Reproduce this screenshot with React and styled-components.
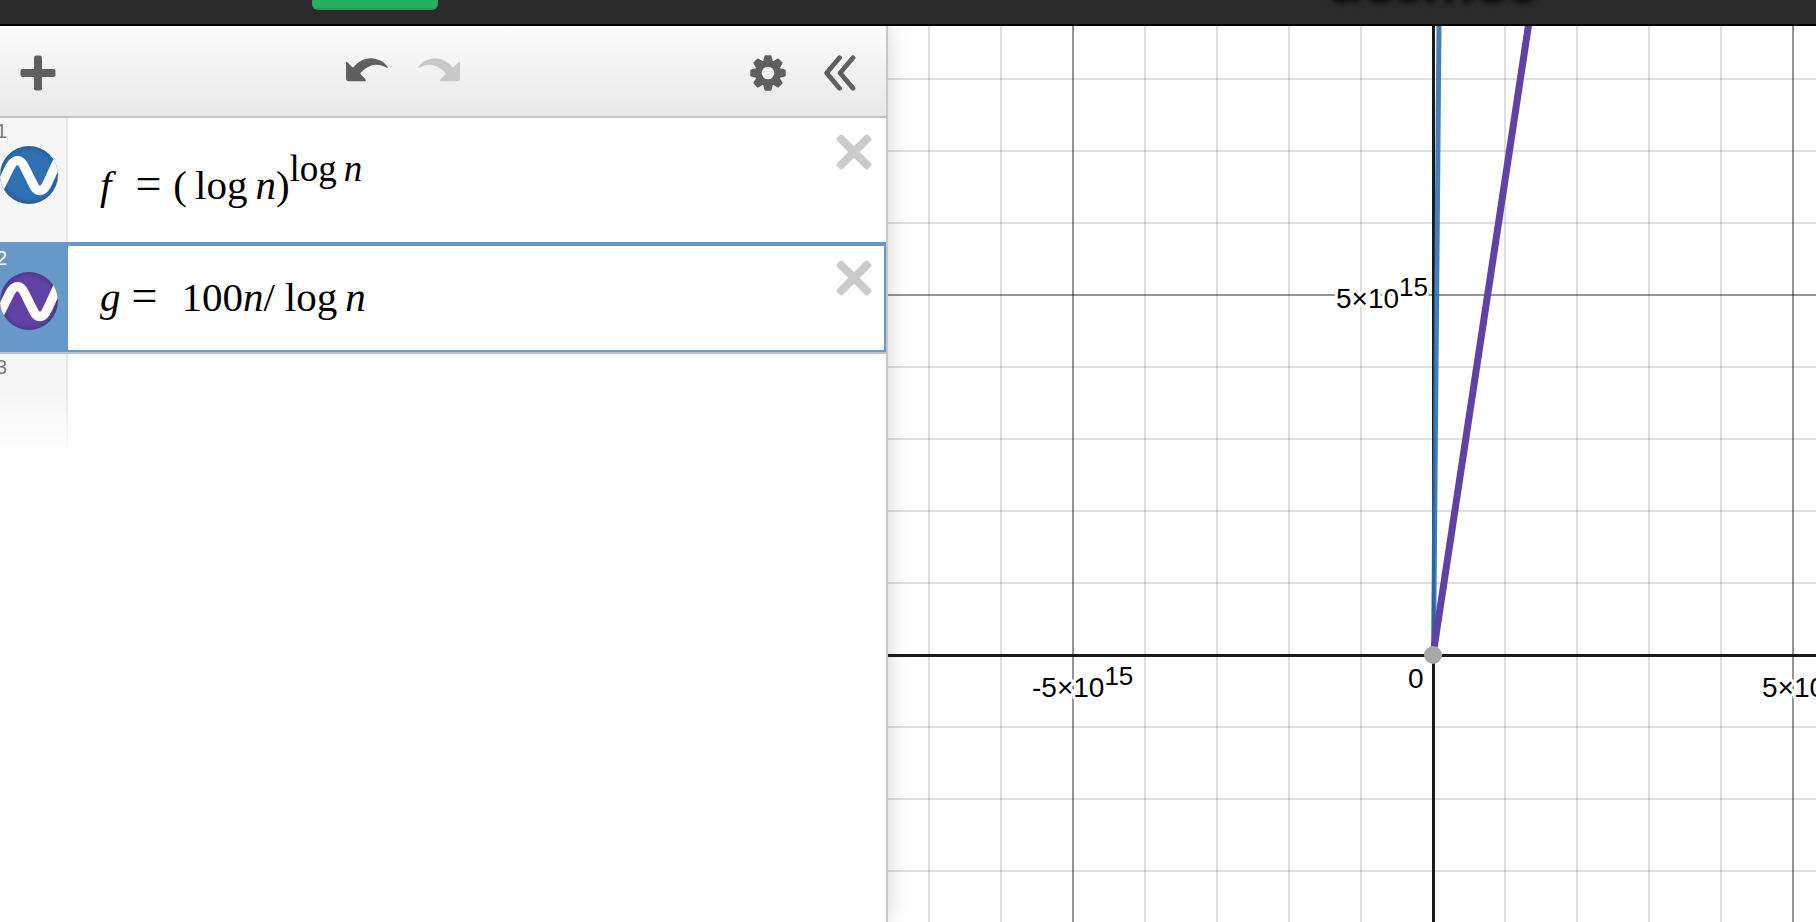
import React from "react";
import styled, { createGlobalStyle } from "styled-components";

const sans = `"Liberation Sans", Arial, sans-serif`;
const serif = `"Liberation Serif", "Times New Roman", serif`;

const GlobalStyle = createGlobalStyle`
  *, *::before, *::after { box-sizing: border-box; }
  body { margin: 0; background: #fff; overflow: hidden; }
`;

const Page = styled.div`
  display: flex;
  flex-direction: column;
  height: 100vh;
  overflow: hidden;
  font-family: ${sans};
`;

const Header = styled.header`
  position: relative;
  z-index: 2;
  flex: none;
  display: flex;
  align-items: flex-end;
  height: 26px;
  padding-left: 312px;
  overflow: hidden;
  background: #2a2a2a;
  border-bottom: 2px solid #000;
`;

const SaveButton = styled.button`
  flex: none;
  width: 126px;
  height: 64px;
  margin-bottom: 14px;
  padding: 0;
  border: 0;
  border-bottom: 2px solid #249f54;
  border-radius: 6px;
  background: #27ae60;
`;

const Brand = styled.a`
  height: 64px;
  margin: 0 0 16px 889px;
  color: transparent;
  font-family: Lato, sans-serif;
  font-size: 62px;
  font-weight: 700;
  line-height: 64px;
  text-decoration: none;
  text-shadow: 0 2px 6px #000;
`;

const Main = styled.main`
  flex: 1;
  display: flex;
  min-height: 0;
`;

const Sidebar = styled.section`
  position: relative;
  z-index: 1;
  flex: 0 0 888px;
  display: flex;
  flex-direction: column;
  background: #fff;
  border-right: 2px solid #c8c8c8;
  box-shadow: 0 0 20px rgba(0, 0, 0, 0.18);
`;

const Toolbar = styled.div`
  display: flex;
  align-items: center;
  justify-content: space-between;
  height: 92px;
  padding: 3px 30px 0 20px;
  background: linear-gradient(#fcfcfc, #e8e8e8);
  border-bottom: 2px solid #c4c4c4;
`;

const ToolGroup = styled.div`
  display: flex;
  gap: ${(p) => p.$gap}px;
  padding-bottom: ${(p) => (p.$raised ? 6 : 0)}px;
`;

const IconButton = styled.button`
  display: flex;
  padding: 0;
  border: 0;
  background: none;
  color: ${(p) => (p.$muted ? "#c8c8c8" : "#5f5f5f")};
`;

const List = styled.ol`
  margin: 0;
  padding: 0;
  list-style: none;
`;

const Row = styled.li`
  display: flex;
  height: ${(p) => p.$height}px;
  border-bottom: ${(p) => (p.$selected ? "2px solid #b9c3d3" : "0")};
`;

const Gutter = styled.div`
  flex: 0 0 68px;
  display: flex;
  flex-direction: column;
  overflow: hidden;
  border-right: 2px solid ${(p) => (p.$selected ? "#6699c9" : "#e6e6e6")};
  background: ${(p) => (p.$selected ? "#6699c9" : "#f6f6f6")};
  color: ${(p) => (p.$selected ? "#fff" : "#7a7a7a")};
  ${(p) => p.$fading && "mask-image: linear-gradient(#000 40%, transparent);"}
`;

const Index = styled.span`
  height: ${(p) => (p.$selected ? 30 : 28)}px;
  margin-left: -4px;
  padding-top: ${(p) => (p.$selected ? 4 : 1)}px;
  font-size: 20px;
  line-height: 24px;
`;

const CurveButton = styled.button`
  width: 58px;
  height: 58px;
  padding: 0;
  border: 0;
  border-radius: 50%;
  overflow: hidden;
  background: radial-gradient(circle, transparent 55%, rgba(0, 0, 0, 0.16) 72%) ${(p) => p.$color};
`;

const Body = styled.div`
  flex: 1;
  display: flex;
  justify-content: space-between;
  align-items: flex-start;
  padding: ${(p) => (p.$selected ? "0 12px 0 32px" : "16px 14px 0 32px")};
  border: solid #6699c9;
  border-width: ${(p) => (p.$selected ? "4px 2px 2px 0" : "0")};
`;

const Formula = styled.div`
  padding-top: ${(p) => p.$top}px;
  font-family: ${serif};
  font-size: 41px;
  line-height: 48px;
  color: #000;
  white-space: pre;

  sup {
    font-size: 37px;
    line-height: 0;
    vertical-align: 18px;
  }
`;

const Equals = styled.span`
  font-size: 46px;
  line-height: 0;
`;

const Gap = styled.span`
  display: inline-block;
  width: ${(p) => p.$w}px;
`;

const Delete = styled(IconButton)`
  margin-top: ${(p) => (p.$selected ? 14 : 0)}px;
  color: #cbcbcb;
`;

const Graph = styled.svg`
  flex: 1;
  min-width: 0;
  height: 100%;
  background: #fff;
  font-family: ${sans};
  font-size: 28px;
`;

const Label = styled.text`
  fill: #000;
  stroke: #fff;
  stroke-width: 6px;
  stroke-linejoin: round;
  paint-order: stroke;
`;

const Exponent = styled.tspan`
  font-size: 26px;
`;

const ArrowIcon = ({ flip }) => (
  <svg width="42" height="24" viewBox="0 0 42 24" aria-hidden="true">
    <g transform={flip ? "translate(42 0) scale(-1 1)" : undefined} fill="currentColor">
      <path d="M0 5.200Q0 2.800 1.700 4.500L7 9.800C12.500 3 19.500 0 26.500 0.400C33.500 0.800 39 4.500 41.700 9Q42.300 10.300 40.800 9.800C35 6.500 29 5.800 24 8C20 9.700 16.500 12.500 14 15.700L19.300 21Q20.800 23.300 18.500 23.300H3Q0 23.300 0 20.500Z" />
    </g>
  </svg>
);

const PlusIcon = () => (
  <svg width="36" height="36" viewBox="0 0 36 36" fill="currentColor" aria-hidden="true">
    <rect x="14" y="0.500" width="8" height="35" rx="2.200" />
    <rect x="0.500" y="14" width="35" height="8" rx="2.200" />
  </svg>
);

const GearIcon = () => (
  <svg width="36" height="36" viewBox="-18 -18 36 36" fill="currentColor" aria-hidden="true">
    <path
      fillRule="evenodd"
      d="M-12.800 0a12.800 12.800 0 1 0 25.600 0a12.800 12.800 0 1 0 -25.600 0ZM-6.300 0a6.300 6.300 0 1 1 12.600 0a6.300 6.300 0 1 1 -12.600 0Z"
    />
    {[0, 45, 90, 135, 180, 225, 270, 315].map((a) => (
      <path key={a} transform={`rotate(${a})`} d="M-5 -11L-3.600 -16.700Q-3.400 -17.700 -2.500 -17.700H2.500Q3.400 -17.700 3.600 -16.700L5 -11Z" />
    ))}
  </svg>
);

const CollapseIcon = () => (
  <svg width="32" height="36" viewBox="0 0 32 36" fill="none" stroke="currentColor" strokeWidth="4.800" strokeLinecap="round" strokeLinejoin="round" aria-hidden="true">
    <path d="M15.500 2.800L2.600 18L15.500 33.200M29 2.800L16.100 18L29 33.200" />
  </svg>
);

const CrossIcon = () => (
  <svg width="36" height="36" viewBox="-18 -18 36 36" fill="currentColor" aria-hidden="true">
    <rect x="-22" y="-4" width="44" height="8" rx="2.400" transform="rotate(45)" />
    <rect x="-22" y="-4" width="44" height="8" rx="2.400" transform="rotate(-45)" />
  </svg>
);

const WaveIcon = () => (
  <svg width="58" height="58" viewBox="0 0 58 58" fill="none" stroke="#fff" strokeWidth="9.400" aria-hidden="true">
    <path d="M-2 45L10 21C14.500 12.500 20.500 12.500 24.500 21L33.500 39C37 46.500 43 46.500 47 38L60 10" />
  </svg>
);

const ORIGIN = { x: 545, y: 629 };
const STEP = 72;
const range = (from, to) => Array.from({ length: to - from + 1 }, (_, i) => from + i);

const gridStroke = (i) => (i % 5 === 0 ? "rgba(0,0,0,0.42)" : "rgba(0,0,0,0.13)");

function Power({ x, y, base }) {
  return (
    <Label x={x} y={y}>
      {base}
      <Exponent dy="-12">15</Exponent>
    </Label>
  );
}

function Plot() {
  return (
    <Graph role="img" aria-label="Graph of f and g">
      <g strokeWidth="2">
        {range(-7, 20).filter(Boolean).map((i) => (
          <line key={`v${i}`} x1={ORIGIN.x + i * STEP} x2={ORIGIN.x + i * STEP} y1="0" y2="100%" stroke={gridStroke(i)} />
        ))}
        {range(-8, 12).filter(Boolean).map((i) => (
          <line key={`h${i}`} y1={ORIGIN.y + i * STEP} y2={ORIGIN.y + i * STEP} x1="0" x2="100%" stroke={gridStroke(i)} />
        ))}
      </g>
      <g fill="#1a1a1a">
        <rect x="544" y="0" width="3" height="100%" />
        <rect x="0" y="628" width="100%" height="3" />
      </g>
      <Power x={448} y={282} base="5×10" />
      <Power x={144} y={671} base="-5×10" />
      <Power x={874} y={671} base="5×10" />
      <Label x={520} y={662}>0</Label>
      <g fill="none">
        <path d="M545.500 629L551 0" stroke="#2d70b3" strokeOpacity="0.9" strokeWidth="5" />
        <path d="M545 629Q591 318 641 -4" stroke="#6042a6" strokeWidth="7" />
      </g>
      <circle cx="545" cy="629" r="9" fill="#a8a8a8" />
    </Graph>
  );
}

function Expression({ index, color, height, selected, top, children }) {
  return (
    <Row $height={height} $selected={selected}>
      <Gutter $selected={selected}>
        <Index $selected={selected}>{index}</Index>
        <CurveButton $color={color} aria-label={`Hide curve ${index}`}>
          <WaveIcon />
        </CurveButton>
      </Gutter>
      <Body $selected={selected}>
        <Formula $top={top}>{children}</Formula>
        <Delete $selected={selected} aria-label={`Delete expression ${index}`}>
          <CrossIcon />
        </Delete>
      </Body>
    </Row>
  );
}

export default function App() {
  return (
    <Page>
      <GlobalStyle />
      <Header>
        <SaveButton aria-label="Save" />
        <Brand href="#">desmos</Brand>
      </Header>
      <Main>
        <Sidebar>
          <Toolbar>
            <IconButton aria-label="Add item"><PlusIcon /></IconButton>
            <ToolGroup $gap={30} $raised>
              <IconButton aria-label="Undo"><ArrowIcon /></IconButton>
              <IconButton $muted aria-label="Redo"><ArrowIcon flip /></IconButton>
            </ToolGroup>
            <ToolGroup $gap={38}>
              <IconButton aria-label="Settings"><GearIcon /></IconButton>
              <IconButton aria-label="Hide list"><CollapseIcon /></IconButton>
            </ToolGroup>
          </Toolbar>
          <List>
            <Expression index={1} color="#2d70b3" height={124} top={27}>
              <i>f</i><Gap $w={24} /><Equals>=</Equals><Gap $w={12} />(<Gap $w={8} />log<Gap $w={8} /><i>n</i>)<sup>log<Gap $w={7} /><i>n</i></sup>
            </Expression>
            <Expression index={2} color="#6042a6" height={112} top={27} selected>
              <i>g</i><Gap $w={11} /><Equals>=</Equals><Gap $w={24} />100<i>n</i>/<Gap $w={10} />log<Gap $w={8} /><i>n</i>
            </Expression>
            <Row $height={100}>
              <Gutter $fading><Index>3</Index></Gutter>
            </Row>
          </List>
        </Sidebar>
        <Plot />
      </Main>
    </Page>
  );
}
